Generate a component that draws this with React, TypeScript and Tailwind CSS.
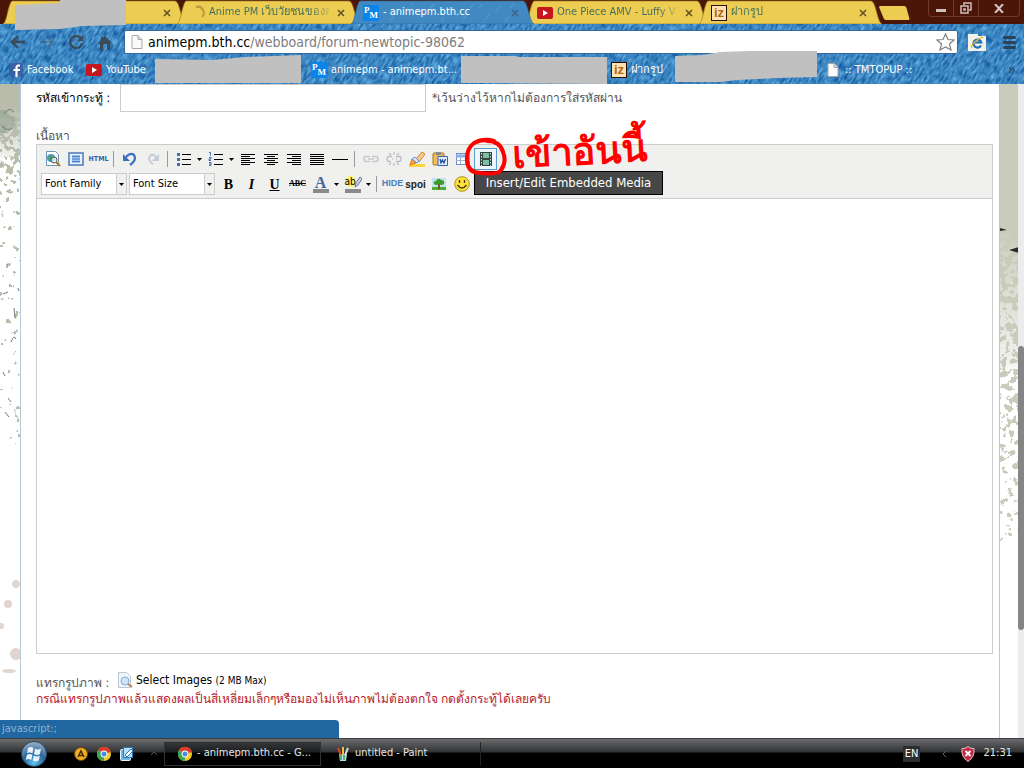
import { useState } from "react";
import type { ReactNode } from "react";
import clsx from "clsx";

const GRUNGE_DOTS = [
  { x: 16, y: 500, r: 4, h: 4 },
  { x: 8, y: 520, r: 4, h: 4 },
  { x: 1, y: 542, r: 3, h: 3 },
  { x: 16, y: 570, r: 6, h: 6 },
  { x: 9, y: 587, r: 7, h: 2 },
];

function Denim() {
  return (
    <svg className="absolute inset-0 h-full w-full" aria-hidden="true">
      <defs>
        <filter id="denim" x="0" y="0" width="100%" height="100%" colorInterpolationFilters="sRGB">
          <feTurbulence type="fractalNoise" baseFrequency="0.14 0.45" numOctaves={2} seed={4} />
          <feColorMatrix values="0.55 0 0 0 -0.04  0.6 0 0 0 0.22  0.45 0 0 0 0.53  0 0 0 0 1" />
        </filter>
      </defs>
      <rect width="100%" height="100%" fill="#3a83bf" />
      <g transform="rotate(-58)">
        <rect x="-100" y="-40" width="1000" height="1400" filter="url(#denim)" />
      </g>
    </svg>
  );
}

function Grunge({ side }: { side: "left" | "right" }) {
  const left = side === "left";
  const id = `grunge-${side}`;
  return (
    <svg className="h-full w-full" aria-hidden="true">
      <defs>
        <linearGradient id={`${id}-fade`} x1="0" y1="0" x2="0" y2={left ? "360" : "460"} gradientUnits="userSpaceOnUse">
          <stop offset="0" stopColor="#fff" stopOpacity={left ? "0.9" : "1"} />
          <stop offset={left ? "0.2" : "0.15"} stopColor="#fff" stopOpacity={left ? "0.75" : "0.9"} />
          <stop offset={left ? "0.28" : "0.6"} stopColor="#fff" stopOpacity={left ? "0.55" : "0.76"} />
          {left && <stop offset="0.34" stopColor="#fff" stopOpacity="0.2" />}
          <stop offset="1" stopColor="#fff" stopOpacity={left ? "0.14" : "0.3"} />
        </linearGradient>
        <filter id={id} x="0" y="0" width="100%" height="100%">
          <feTurbulence type="fractalNoise" baseFrequency="0.15" numOctaves={3} seed={left ? 7 : 12} result="n" />
          <feColorMatrix in="n" values="0 0 0 0 1  0 0 0 0 1  0 0 0 0 1  3 0 0 0 -1.5" result="a" />
          <feComposite in="SourceGraphic" in2="a" operator="arithmetic" k2="1" k3="1" k4="-0.6" result="m" />
          <feComponentTransfer in="m" result="t">
            <feFuncA type="linear" slope="8" intercept="-1" />
          </feComponentTransfer>
          <feFlood floodColor={left ? "#b9bcab" : "#cbcbbc"} />
          <feComposite in2="t" operator="in" />
        </filter>
      </defs>
      <rect width="24" height={left ? 360 : 460} fill={`url(#${id}-fade)`} filter={`url(#${id})`} />
      {left ? (
        <>
          <path d="M0 26h6l3 5 6 2v8l-7 8H0z" fill="#94a395" fillOpacity="0.6" />
          <g fill="none" stroke="#6f7d74">
            <path d="M4 30 q5 -8 10 -2 M2 42 q6 6 10 2" />
            <path d="M7 180 v4 M3 210 l5 -2 M14 224 l1 10 M11 258 q3 -8 5 -3 M3 288 l2 4 M8 314 l3 4 M5 328 l4 5 M18 204 l1 3 M19 350 v3" />
          </g>
          {GRUNGE_DOTS.map((d) => (
            <ellipse key={d.y} cx={d.x} cy={d.y} rx={d.r} ry={d.h} fill="#e2d5cf" />
          ))}
        </>
      ) : (
        <g fill="#2c2a26">
          <path d="M0 144 l7 2 l-7 1z" />
          <path d="M9 166 l10 -3 v6z" />
        </g>
      )}
    </svg>
  );
}

function PmIcon() {
  return (
    <svg width="16" height="16" viewBox="0 0 16 16" className="shrink-0">
      <rect width="16" height="16" fill="#0a84e8" />
      <text x="1" y="8" fill="#fff" className="font-['Liberation_Serif',serif] text-[9px] font-bold">
        P<tspan dy="5">M</tspan>
      </text>
    </svg>
  );
}

function YoutubeIcon() {
  return (
    <svg width="16" height="16" viewBox="0 0 16 16" className="shrink-0">
      <rect y="2" width="16" height="12" rx="2" fill="#c4161c" />
      <path d="M6 5 L11 8 L6 11z" fill="#fff" />
    </svg>
  );
}

function HostIcon() {
  return (
    <span className="flex h-4 w-4 shrink-0 items-center justify-center border border-[#2d1004] bg-[#fbe3b5] font-['Liberation_Sans',sans-serif] text-[13px] leading-3 font-bold text-[#b3690b]">
      iz
    </span>
  );
}

function PageIcon({ className }: { className?: string }) {
  return (
    <svg width="12" height="16" viewBox="0 0 12 16" className={clsx("shrink-0", className)}>
      <path d="M1 1.5h6l4 4v9H1z" fill="#fafafa" stroke="#a8a8a8" />
      <path d="M7 1.5v4h4" fill="#ddd" stroke="#a8a8a8" />
    </svg>
  );
}

function ChromeIcon() {
  return (
    <svg width="16" height="16" viewBox="0 0 16 16" className="shrink-0">
      <circle cx="8" cy="8" r="7" fill="#f5c926" />
      <path d="M8 8 L2 4.3 A7 7 0 0 1 14.8 6z" fill="#dc3a2b" />
      <path d="M8 8 L2 4.3 A7 7 0 0 0 8 15z" fill="#3aa655" />
      <circle cx="8" cy="8" r="3.4" fill="#fff" />
      <circle cx="8" cy="8" r="2.5" fill="#4a8be0" />
    </svg>
  );
}

function Tab({ title, icon, active }: { title: string; icon?: ReactNode; active?: boolean }) {
  return (
    <div className={clsx("relative -mr-[9px] h-6 w-[183px] min-w-0 shrink", active && "z-10")}>
      <svg className="absolute inset-0 h-full w-full" viewBox="0 0 183 24" preserveAspectRatio="none">
        <path
          d="M0 24 C4 23 5 4 9 1 H172 C177 1 178 22 183 24z"
          fill={active ? "#4189c2" : "#edcd51"}
          stroke={active ? "#2d6796" : "#a17e25"}
          strokeWidth="0.7"
        />
        {active && (
          <path
            d="M20 8 l3 -4 M40 20 l5 -7 M80 8 l3 -4 M112 19 l5 -7 M145 12 l4 -6 M20 22 l3 -4 M90 22 l3 -4 M128 8 l3 -4 M154 22 l4 -6 M60 6 l2 -3 M134 20 l4 -6 M120 8 l2 -4 M160 8 l2 -4"
            stroke="#5b9ed2"
          />
        )}
      </svg>
      <div className="relative flex h-full items-center gap-1 pt-px pr-[11px] pl-3">
        {icon}
        <span
          className={clsx(
            "min-w-0 flex-1 overflow-hidden whitespace-nowrap",
            active ? "text-white" : "bg-linear-to-r from-[#3c6b63] from-85% to-[#3c6b63]/20 bg-clip-text text-transparent",
          )}
        >
          {title}
        </span>
        <button aria-label="Close tab" className="flex h-4 w-4 shrink-0 items-center justify-center">
          <svg width="8" height="8" viewBox="0 0 8 8">
            <path d="M1 1 L7 7 M7 1 L1 7" stroke={active ? "#3e6285" : "#62552a"} strokeWidth="1.6" />
          </svg>
        </button>
      </div>
    </div>
  );
}

function TitleBar() {
  return (
    <div className="relative flex h-6 items-start bg-[#4b1607] pl-[3px]">
      <div className="flex min-w-0">
        <Tab title="" />
        <Tab
          title="Anime PM เว็บวัยชนของค"
          icon={
            <svg width="16" height="16" viewBox="0 0 16 16" className="shrink-0">
              <path d="M7 2 A6 6 0 0 1 13 12" fill="none" stroke="#b8973f" strokeWidth="2" />
            </svg>
          }
        />
        <Tab active title="- animepm.bth.cc" icon={<PmIcon />} />
        <Tab title="One Piece AMV - Luffy V" icon={<YoutubeIcon />} />
        <Tab title="ฝากรูป" icon={<HostIcon />} />
      </div>
      <button aria-label="New tab" className="ml-[5px] pt-[6px]">
        <svg width="32" height="14" viewBox="0 0 32 14">
          <path d="M2 0 H26 Q28 0 28.5 2 L31.5 13 Q31.5 14 30 14 H8 Q6 14 5.5 12 L1 1z" fill="#edcd51" />
        </svg>
      </button>
      <div className="mr-1 ml-auto flex h-[17px] w-[92px] shrink-0 rounded-b border border-t-0 border-[#6d3a2b]">
        <button aria-label="Minimize" className="flex w-[25px] items-center justify-center border-r border-[#6d3a2b]">
          <span className="mt-1 h-[3px] w-[10px] bg-[#cfc0bb]" />
        </button>
        <button aria-label="Restore" className="flex w-[25px] items-center justify-center border-r border-[#6d3a2b]">
          <svg width="12" height="12" viewBox="0 0 12 12" fill="none" stroke="#cfc0bb" strokeWidth="1.5">
            <path d="M4 3V1h7v7H9M1 4h7v7H1zM4 7h1v1H4z" />
          </svg>
        </button>
        <button aria-label="Close window" className="flex flex-1 items-center justify-center">
          <svg width="10" height="9" viewBox="0 0 10 9">
            <path d="M1 0 L9 9 M9 0 L1 9" stroke="#d3c6c1" strokeWidth="2" />
          </svg>
        </button>
      </div>
    </div>
  );
}

function AddressBar() {
  return (
    <div className="relative flex h-9 items-center pr-2 pl-[10px]">
      <div className="flex w-[114px] items-center gap-[14px] text-[#3a4b5a]">
        <button aria-label="Back">
          <svg width="16" height="14" viewBox="0 0 16 14" fill="none" stroke="currentColor" strokeWidth="2.4">
            <path d="M8 1 L2 7 L8 13 M2 7 H15" />
          </svg>
        </button>
        <button aria-label="Forward" className="opacity-40">
          <svg width="14" height="14" viewBox="0 0 14 14" fill="none" stroke="currentColor" strokeWidth="2.2">
            <path d="M7 2 L12 7 L7 12 M12 7 H0" />
          </svg>
        </button>
        <button aria-label="Reload">
          <svg width="16" height="16" viewBox="0 0 16 16">
            <path d="M13 4.5 A6 6 0 1 0 14 9.5" fill="none" stroke="currentColor" strokeWidth="2.4" />
            <path d="M15 1 V7 H9z" fill="currentColor" />
          </svg>
        </button>
        <button aria-label="Home">
          <svg width="14" height="15" viewBox="0 0 14 15" fill="currentColor">
            <path d="M7 1 L14 8 L12.5 9 L12 8.5 V15 H9 V9 H5 V15 H2 V8.5 L1.5 9 L0 8 L3 5 V2 H5 V3z" />
          </svg>
        </button>
      </div>
      <div className="flex h-6 flex-1 items-center gap-[5px] rounded-xs border border-[#2d6ba0] bg-white px-[6px]">
        <PageIcon />
        <div className="flex-1 text-[14px] whitespace-nowrap text-[#7d7d7d]">
          <span className="text-black">animepm.bth.cc</span>/webboard/forum-newtopic-98062
        </div>
        <button aria-label="Bookmark this page" className="-mr-1">
          <svg width="19" height="18" viewBox="0 0 19 18">
            <path
              d="M9.5 1 L12 6.5 L18 7 L13.5 11 L15 17 L9.5 14 L4 17 L5.5 11 L1 7 L7 6.5z"
              fill="#fff"
              stroke="#808080"
              strokeWidth="1.2"
            />
          </svg>
        </button>
      </div>
      <button aria-label="Open in IE Tab" className="ml-[10px]">
        <svg width="18" height="18" viewBox="0 0 18 18">
          <path d="M0 1h10v2h8v15H0z" fill="#f4f2e8" />
          <path d="M13 12.5 A4 4 0 1 1 13.3 9.5 H6" fill="none" stroke="#1a6fc0" strokeWidth="2.2" />
          <path d="M4 15 Q2 13 8 8 T15 5" fill="none" stroke="#e9b427" strokeWidth="1.3" />
        </svg>
      </button>
      <button aria-label="Menu" className="ml-[17px] flex w-[13px] flex-col gap-[2px]">
        <span className="h-[3px] rounded-sm bg-[#2b4257]" />
        <span className="h-[3px] rounded-sm bg-[#2b4257]" />
        <span className="h-[3px] rounded-sm bg-[#2b4257]" />
      </button>
    </div>
  );
}

function BookmarkBar() {
  return (
    <nav className="relative flex h-6 items-center px-2 pb-1 whitespace-nowrap text-white">
      <a href="#facebook" className="flex w-[78px] shrink-0 items-center gap-[3px]">
        <svg width="16" height="16" viewBox="0 0 16 16" className="shrink-0">
          <rect x="1" y="1" width="14" height="14" rx="2" fill="#3b5998" fillOpacity="0.8" />
          <path d="M12 3.5 H10.5 Q8.5 3.5 8.5 6 V15 M5.5 8 H12" fill="none" stroke="#fff" strokeWidth="2.2" />
        </svg>
        Facebook
      </a>
      <a href="#youtube" className="flex w-[225px] shrink-0 items-center gap-1">
        <YoutubeIcon />
        YouTube
      </a>
      <a href="#animepm" className="flex w-[300px] shrink-0 items-center gap-1">
        <PmIcon />
        animepm - animepm.bt...
      </a>
      <a href="#images" className="flex w-[216px] shrink-0 items-center gap-1">
        <HostIcon />
        ฝากรูป
      </a>
      <a href="#topup" className="flex shrink-0 items-center gap-[6px]">
        <PageIcon />
        :: TMTOPUP ::
      </a>
      <button aria-label="More bookmarks" className="ml-auto text-[15px] text-[#1f3f5c]">
        »
      </button>
    </nav>
  );
}

// paint-brush patches that hide the private tab and bookmarks
function Patches() {
  return (
    <svg className="pointer-events-none absolute top-0 left-0 z-20" width="820" height="86" fill="#c0c0c0" aria-hidden="true">
      <path d="M15 5 L60 3 V0 H126 V25 L82 26 L60 29 L15 30z" />
      <path d="M155 59 L212 60 L245 57 L301 55 V83 H155z" />
      <path d="M461 56 H515 L520 57 H607 V84 L488 83 H461z" />
      <path d="M675 56 L703 55 L720 52 L750 51 H817 V77 L778 78 L737 80 L720 82 H675z" />
    </svg>
  );
}

function ToolButton({ label, children, className }: { label: string; children: ReactNode; className?: string }) {
  return (
    <button
      type="button"
      aria-label={label}
      className={clsx("flex h-[22px] w-[23px] shrink-0 items-center justify-center whitespace-nowrap", className)}
    >
      {children}
    </button>
  );
}

function Separator() {
  return <span className="mx-[3px] h-4 w-[2px] shrink-0 border-l border-[#9a9a9a]" />;
}

function Arrow({ label }: { label: string }) {
  return (
    <button type="button" aria-label={label} className="flex h-[22px] w-[9px] shrink-0 items-center justify-center">
      <svg width="5" height="3" viewBox="0 0 5 3">
        <path d="M0 0h5L2.5 3z" />
      </svg>
    </button>
  );
}

function Glyph({ children }: { children: ReactNode }) {
  return (
    <svg width="16" height="16" viewBox="0 0 16 16" fill="none" className="shrink-0">
      {children}
    </svg>
  );
}

function Lines({ d }: { d: string }) {
  return (
    <Glyph>
      <path d={d} stroke="#000" />
    </Glyph>
  );
}

function FontSelect({ label }: { label: string }) {
  return (
    <div className="relative mr-[2px] w-[86px] shrink-0">
      <select aria-label={label} className="block h-[22px] w-full appearance-none border border-[#ccc] bg-white pl-[3px] text-[11px] text-black">
        <option>{label}</option>
      </select>
      <span className="pointer-events-none absolute top-px right-px flex h-5 w-[10px] items-center justify-center border-l border-[#ccc] bg-[#f0f0ee]">
        <svg width="5" height="3" viewBox="0 0 5 3">
          <path d="M0 0h5L2.5 3z" />
        </svg>
      </span>
    </div>
  );
}

function EditorToolbar() {
  return (
    <div className="border-b border-[#ccc] bg-[#f0f0ee] px-1 pt-[2px] pb-[3px] text-black">
      <div className="flex h-6 items-center">
        <ToolButton label="Preview">
          <Glyph>
            <path d="M1.5 .5h9l3 3v11h-12z" fill="#fff" stroke="#6f93b8" />
            <circle cx="6" cy="7" r="4" fill="#4f9bbb" />
            <path d="M3 6q3 -2 5 1t-3 3" fill="#4ca35c" />
            <circle cx="9" cy="9" r="3" fill="#d7ecf7" fillOpacity=".8" stroke="#555" />
            <path d="M11 11l4 4" stroke="#a9762d" strokeWidth="2" />
          </Glyph>
        </ToolButton>
        <ToolButton label="Fullscreen">
          <Glyph>
            <rect x="1" y="2" width="14" height="12" fill="#e8f2ff" stroke="#4878bb" strokeWidth="1.5" />
            <rect x="4" y="4" width="8" height="8" fill="#9dc2ef" />
            <path d="M4 5.5h8M4 8h8M4 10.5h8" stroke="#4d80c4" />
          </Glyph>
        </ToolButton>
        <ToolButton label="Edit HTML source" className="text-[7px] font-bold text-[#2f62a6]">
          HTML
        </ToolButton>
        <Separator />
        <ToolButton label="Undo">
          <Glyph>
            <path d="M4 6 Q8 1 12 4 Q15 9 8 14" stroke="#3b6fc0" strokeWidth="2.2" />
            <path d="M1 3v7h7z" fill="#3b6fc0" />
          </Glyph>
        </ToolButton>
        <ToolButton label="Redo" className="opacity-30">
          <Glyph>
            <path d="M12 7 Q8 2 5 5 Q2 9 8 13" stroke="#5f7ea8" strokeWidth="2" />
            <path d="M14 3v7H7z" fill="#5f7ea8" />
          </Glyph>
        </ToolButton>
        <Separator />
        <ToolButton label="Unordered list">
          <Glyph>
            <path d="M6 3.5h9M6 8.5h9M6 13.5h9" stroke="#000" />
            <path d="M1 3.5h3M1 8.5h3M1 13.5h3" stroke="#3f6fae" strokeWidth="3" />
          </Glyph>
        </ToolButton>
        <Arrow label="List styles" />
        <ToolButton label="Ordered list">
          <Glyph>
            <path d="M6 3.5h9M6 8.5h9M6 13.5h9" stroke="#000" />
            <path d="M1 1.5h1.5v3M1 6.5h2v1.5h-2v1.5h2M1 11.5h2v3h-2M1 13h2" stroke="#3f6fae" />
          </Glyph>
        </ToolButton>
        <Arrow label="Number styles" />
        <ToolButton label="Align left"><Lines d="M1 3.5h14M1 5.5h9M1 7.5h14M1 9.5h9M1 11.5h14M1 13.5h9" /></ToolButton>
        <ToolButton label="Align center"><Lines d="M1 3.5h14M4 5.5h8M1 7.5h14M4 9.5h8M1 11.5h14M4 13.5h8" /></ToolButton>
        <ToolButton label="Align right"><Lines d="M1 3.5h14M6 5.5h9M1 7.5h14M6 9.5h9M1 11.5h14M6 13.5h9" /></ToolButton>
        <ToolButton label="Align full"><Lines d="M1 3.5h14M1 5.5h14M1 7.5h14M1 9.5h14M1 11.5h14M1 13.5h14" /></ToolButton>
        <ToolButton label="Horizontal rule"><Lines d="M0 8.5h16" /></ToolButton>
        <Separator />
        <ToolButton label="Insert link">
          <Glyph>
            <path d="M7 5.5H3Q1 5.5 1 8t2 2.5h4M9 5.5h4Q15 5.5 15 8t-2 2.5H9M5 8h6" stroke="#c3c7cd" strokeWidth="1.5" />
          </Glyph>
        </ToolButton>
        <ToolButton label="Unlink">
          <Glyph>
            <path
              d="M6 5.5H3Q1 5.5 1 8t2 2.5h2M10 5.5h3Q15 5.5 15 8t-2 2.5h-3M6 8h1M10 8h1M8 1v3M3 2l2 2M13 2l-2 2M8 12v3M3 14l2 -2M13 14l-2 -2"
              stroke="#b9bec6"
              strokeWidth="1.3"
            />
          </Glyph>
        </ToolButton>
        <ToolButton label="Cleanup">
          <Glyph>
            <path d="M0 14.5h16" stroke="#ffd23f" strokeWidth="3" />
            <path d="M1 14l2 -6 4 4z" fill="#f6a13a" stroke="#d9822a" />
            <path d="M7 8l6 -7 3 2 -6 8z" fill="#f7c98b" stroke="#d08a30" />
            <path d="M3 8l3 -2 4 4 -2 2z" fill="#dfe8f8" stroke="#6f8ec4" />
          </Glyph>
        </ToolButton>
        <ToolButton label="Paste from Word">
          <Glyph>
            <rect x="1" y="2" width="11" height="12" rx="1" fill="#eebd52" stroke="#a97720" />
            <path d="M4 1h5v3H4z" fill="#8b8b8b" />
            <path d="M6 5.5h9.5v9H6z" fill="#e5efff" stroke="#3864ad" />
            <path d="M8 8l1 4 1.5 -3 1.5 3 1.5 -4" stroke="#234f9e" strokeWidth="1.3" />
          </Glyph>
        </ToolButton>
        <ToolButton label="Insert table">
          <Glyph>
            <rect x="1.5" y="2.5" width="13" height="11" fill="#fff" stroke="#6f8fc9" />
            <path d="M1 5h14" stroke="#8caee6" strokeWidth="3" />
            <path d="M1 9.5h14M5.5 3v10M10.5 3v10" stroke="#9ab2dc" />
          </Glyph>
        </ToolButton>
        <div className="relative shrink-0">
          <ToolButton label="Insert/Edit Embedded Media" className="border border-[#5c9bc9] bg-[#eef6fb]">
            <Glyph>
              <path d="M2 1h12v14H2z" fill="#35473f" />
              <path d="M5 2h6v5H5zM5 9h6v5H5z" fill="#7cbfa4" />
              <path d="M3.5 2v13M12.5 2v13" stroke="#cfe0d9" strokeDasharray="1.5 1.5" />
            </Glyph>
          </ToolButton>
          <svg className="pointer-events-none absolute -top-[11px] -left-[11px] z-20" width="46" height="40" viewBox="0 0 46 40" fill="none" aria-hidden="true">
            <path
              d="M31 4 Q20 1 11 6 Q3 12 4 24 Q5 36 18 36 Q35 38 38 33 Q44 25 40 15 Q37 4 24 4"
              stroke="#f00"
              strokeWidth="4"
              strokeLinecap="round"
              strokeLinejoin="round"
            />
          </svg>
          <p className="pointer-events-none absolute -top-[11px] left-[38px] z-20 origin-left -rotate-3 text-[38px] leading-[36px] font-bold whitespace-nowrap text-[#f00]">
            เข้าอันนี้
          </p>
          <div role="tooltip" className="absolute top-[23px] left-0 z-10 flex h-6 w-[189px] items-center justify-center border border-black bg-[#474747] text-[13px] whitespace-nowrap text-white">
            Insert/Edit Embedded Media
          </div>
        </div>
      </div>
      <div className="flex h-6 items-center pt-[2px]">
        <FontSelect label="Font Family" />
        <FontSelect label="Font Size" />
        <ToolButton label="Bold" className="font-['Liberation_Serif',serif] text-[14px] font-black">B</ToolButton>
        <ToolButton label="Italic" className="font-['Liberation_Serif',serif] text-[14px] font-bold italic">I</ToolButton>
        <ToolButton label="Underline" className="font-['Liberation_Serif',serif] text-[14px] font-bold underline">U</ToolButton>
        <ToolButton label="Strikethrough" className="font-['Liberation_Serif',serif] text-[8px] font-bold line-through">ABC</ToolButton>
        <ToolButton label="Text color" className="font-['Liberation_Serif',serif] text-[16px] font-bold text-[#45669b]">
          <span className="h-[17px] w-4 border-b-4 border-[#8a8a8a] leading-[13px]">A</span>
        </ToolButton>
        <Arrow label="Choose text color" />
        <ToolButton label="Background color">
          <span className="relative h-[17px] w-4 border-b-4 border-[#8a8a8a] text-left text-[10px] leading-3">
            <span className="rounded-full bg-[#fff36b]">ab</span>
            <svg className="absolute top-0 -right-px" width="8" height="12" viewBox="0 0 8 12">
              <path d="M1 11 L2 7 L6 1 L8 3 L4 9z" fill="#c8d9f2" stroke="#65758d" />
            </svg>
          </span>
        </ToolButton>
        <Arrow label="Choose background color" />
        <Separator />
        <ToolButton label="Hide" className="font-['Liberation_Sans',sans-serif] text-[9px] font-bold text-[#4a7fbd]">HIDE</ToolButton>
        <ToolButton label="Spoiler" className="font-['Liberation_Sans',sans-serif] text-[10px] font-bold text-[#222]">spoi</ToolButton>
        <ToolButton label="Insert image">
          <Glyph>
            <path d="M1 2h14v12H1z" fill="#bfe3ef" />
            <path d="M1 11h14v3H1z" fill="#4eab2f" />
            <path d="M8 7v6" stroke="#845126" strokeWidth="2" />
            <path d="M3 8q-1 -3 2 -3 2 -4 5 -1 4 0 3 4 -3 2 -5 0 -3 2 -5 0z" fill="#3d9a2b" />
          </Glyph>
        </ToolButton>
        <ToolButton label="Insert emotion">
          <Glyph>
            <circle cx="8" cy="8" r="7.3" fill="#ffe23d" stroke="#a8921d" />
            <path d="M5.5 4v3M10.5 4v3M3.5 9q4.500 6 9 0" stroke="#4a3c00" strokeWidth="1.4" />
          </Glyph>
        </ToolButton>
      </div>
    </div>
  );
}

function TopicForm() {
  const [password, setPassword] = useState("");
  const [content, setContent] = useState("");

  return (
    <form className="flex min-w-0 flex-1 flex-col border-x border-[#b5cad6] bg-white pr-[6px] pb-[30px] pl-[15px] text-[12px] text-[#555]">
      <div className="flex">
        <label htmlFor="password" className="w-[84px] pt-[5px] whitespace-nowrap text-black">
          รหัสเข้ากระทู้ :
        </label>
        <input
          id="password"
          type="text"
          value={password}
          onChange={(e) => setPassword(e.target.value)}
          className="h-7 w-[306px] border border-[#ccc] px-2 outline-none"
        />
        <span className="pt-[5px] pl-[6px] whitespace-nowrap">*เว้นว่างไว้หากไม่ต้องการใส่รหัสผ่าน</span>
      </div>
      <label htmlFor="content" className="mt-[15px] flex h-[17px] items-center">
        เนื้อหา
      </label>
      <div className="flex flex-1 flex-col border border-[#ccc]">
        <EditorToolbar />
        <textarea
          id="content"
          value={content}
          onChange={(e) => setContent(e.target.value)}
          className="min-h-0 w-full flex-1 resize-none p-2 outline-none"
        />
      </div>
      <div className="mt-[15px] flex h-[21px] items-center">
        <span className="w-[81px] pt-[6px] whitespace-nowrap">แทรกรูปภาพ :</span>
        <button type="button" className="flex items-center gap-[3px] text-black">
          <Glyph>
            <path d="M1.5 .5h8l4 4v11h-12z" fill="#eef6fd" stroke="#b8c8d7" />
            <circle cx="8" cy="9" r="4" fill="#cfe6f8" stroke="#8ca9c3" />
            <path d="M11 12l4 3" stroke="#b58b51" strokeWidth="2" />
          </Glyph>
          <span className="text-[12px]">Select Images <span className="text-[10px]">(2 MB Max)</span></span>
        </button>
      </div>
      <p className="h-[18px] leading-[18px] whitespace-nowrap text-[#b8191f]">
        กรณีแทรกรูปภาพแล้วแสดงผลเป็นสี่เหลี่ยมเล็กๆหรือมองไม่เห็นภาพไม่ต้องตกใจ กดตั้งกระทู้ได้เลยครับ
      </p>
    </form>
  );
}

function Taskbar() {
  return (
    <footer className="flex h-[30px] shrink-0 items-center border-t border-[#3c3c40] bg-linear-to-b from-[#6b6d6f] from-0% via-[#303234] via-45% to-black to-50% text-[11px] text-[#e6e6e6]">
      <button aria-label="Start" className="ml-5 shrink-0">
        <svg width="28" height="28" viewBox="0 0 28 28">
          <defs>
            <radialGradient id="orb" cx="0.5" cy="0.85" r="0.85">
              <stop offset="0" stopColor="#5dc5ef" />
              <stop offset="0.5" stopColor="#2a66a0" />
              <stop offset="1" stopColor="#a2b6c9" />
            </radialGradient>
          </defs>
          <circle cx="14" cy="14" r="12.5" fill="url(#orb)" stroke="#26445f" />
          <path
            d="M8 8q3 -2 5.5 0l-1 5.5q-3 -2 -5.5 0zM15 8.5q3 2 6 0l-1 5.5q-3 2 -6 0zM6.8 15q3 -2 5.5 0l-1 5q-3 -2 -5.5 0zM13.8 15.5q3 2 6 0l-1 5q-3 2 -6 0z"
            fill="#e9f2f9"
          />
        </svg>
      </button>
      <div className="ml-[25px] flex w-[91px] shrink-0 items-center gap-[7px]">
        <button aria-label="Media player">
          <Glyph>
            <circle cx="8" cy="8" r="6.5" fill="#f1ae20" stroke="#6a4508" />
            <path d="M5 11l3 -6 3 6M6 9.5h4" stroke="#422900" strokeWidth="1.5" />
          </Glyph>
        </button>
        <button aria-label="Google Chrome"><ChromeIcon /></button>
        <button aria-label="Show desktop">
          <Glyph>
            <rect x="1.5" y="3.5" width="10" height="11" rx="1" fill="#6eb7e7" stroke="#e4f4ff" />
            <rect x="4.5" y="1.5" width="9" height="10" fill="#b7def8" stroke="#2b78b6" />
            <path d="M6 9l6 -6 2 2 -6 6z" fill="#fff" stroke="#2b78b6" />
          </Glyph>
        </button>
        <button aria-label="More shortcuts" className="ml-2">
          <svg width="8" height="5" viewBox="0 0 8 5">
            <path d="M1 4 L4 1 L7 4" fill="none" stroke="#555" />
          </svg>
        </button>
      </div>
      <button className="flex h-[24px] w-[157px] min-w-0 items-center gap-1 border border-[#303236] bg-black/40 pl-3 whitespace-nowrap">
        <ChromeIcon />
        - animepm.bth.cc - G...
      </button>
      <button className="ml-1 flex h-[24px] w-[156px] min-w-0 items-center gap-1 border-r border-[#222] pl-[10px] whitespace-nowrap">
        <Glyph>
          <path d="M4 8h8l-1 7H5z" fill="#b5dceb" />
          <path d="M6 9L3 2" stroke="#d9443a" strokeWidth="2" />
          <path d="M8 9V1" stroke="#e8c63a" strokeWidth="2" />
          <path d="M10 9l3 -7" stroke="#dcdcdc" strokeWidth="2" />
          <path d="M6 9v5M9 9v5" stroke="#3d9d57" strokeWidth="1.5" />
        </Glyph>
        untitled - Paint
      </button>
      <div className="ml-auto flex shrink-0 items-center pr-3">
        <button className="h-4 bg-[#2b2d30] px-[2px] text-white">EN</button>
        <button aria-label="Show hidden icons" className="ml-[22px]">
          <svg width="5" height="8" viewBox="0 0 5 8">
            <path d="M4 1 L1 4 L4 7" fill="none" stroke="#666" />
          </svg>
        </button>
        <button aria-label="Security alerts" className="mr-2 ml-[14px]">
          <svg width="14" height="16" viewBox="0 0 14 16">
            <path d="M7 0.5 Q10 3 13 2.5 Q14 11 7 15.5 Q0 11 1 2.5 Q4 3 7 .5z" fill="#c22a44" stroke="#e7c1c6" />
            <path d="M4.5 5l5 5M9.5 5l-5 5" stroke="#fff" strokeWidth="1.8" />
          </svg>
        </button>
        <time className="text-[11px]">21:31</time>
      </div>
    </footer>
  );
}

export default function App() {
  return (
    <div className="flex h-screen flex-col overflow-hidden bg-white font-['DejaVu_Sans_Condensed','Noto_Sans',sans-serif] text-[11px]">
      <header className="relative shrink-0">
        <TitleBar />
        <div className="relative overflow-hidden">
          <Denim />
          <AddressBar />
          <BookmarkBar />
        </div>
        <Patches />
      </header>
      <main className="relative flex min-h-0 flex-1">
        <div className="w-5 shrink-0 overflow-hidden"><Grunge side="left" /></div>
        <TopicForm />
        <div className="w-[18px] shrink-0 overflow-hidden"><Grunge side="right" /></div>
        <div className="flex w-[6px] shrink-0 flex-col bg-[#ececec]">
          <div className="flex-[262]" />
          <div className="flex-[284] rounded-sm bg-[#858585]" />
          <div className="flex-[108]" />
        </div>
        <div className="absolute bottom-0 left-0 flex h-[18px] w-[339px] items-center rounded-tr-sm bg-[#2168a2] pl-[2px] text-[#8fb3d0]">
          javascript:;
        </div>
      </main>
      <Taskbar />
    </div>
  );
}
